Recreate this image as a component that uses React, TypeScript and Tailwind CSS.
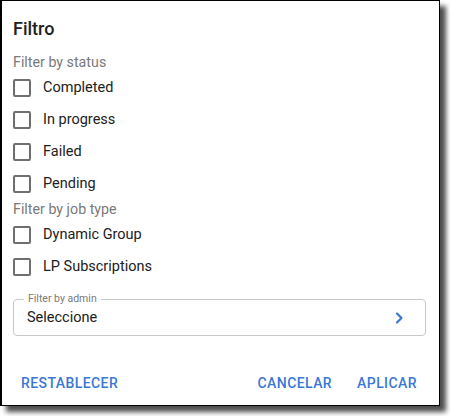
import { useState } from 'react';

const statusOptions = ['Completed', 'In progress', 'Failed', 'Pending'];
const jobTypeOptions = ['Dynamic Group', 'LP Subscriptions'];

const CheckRow = ({ label, checked, onToggle }: { label: string; checked: boolean; onToggle: () => void }) => (
  <label className="flex items-center h-8 cursor-pointer" onClick={onToggle}>
    <span className="w-[18px] h-[18px] rounded-[2px] border-2 border-[#6f6f6f] flex items-center justify-center">
      {checked && (
        <svg width="14" height="14" viewBox="0 0 24 24" fill="none" stroke="#6f6f6f" strokeWidth="3">
          <path d="M5 12l5 5 9-10" />
        </svg>
      )}
    </span>
    <span className="ml-3 text-[14.5px] text-[#212121] leading-5">{label}</span>
  </label>
);

const FilterDialog = () => {
  const [checked, setChecked] = useState<Record<string, boolean>>({});
  const toggle = (k: string) => setChecked((c) => ({ ...c, [k]: !c[k] }));

  return (
    <div className="w-[440px] h-[406px] bg-white border border-black border-l-2 shadow-[6px_6px_5px_rgba(0,0,0,0.7)] flex flex-col pl-[11px] pr-3">
      <h2 className="mt-4 text-[18px] leading-6 font-medium text-[#212121]">Filtro</h2>

      <div className="mt-[11px] text-[14.25px] leading-5 text-[#7a7a7a]">Filter by status</div>
      {statusOptions.map((o) => (
        <CheckRow key={o} label={o} checked={!!checked[o]} onToggle={() => toggle(o)} />
      ))}

      <div className="mt-[-1px] text-[14.25px] leading-5 text-[#7a7a7a]">Filter by job type</div>
      {jobTypeOptions.map((o) => (
        <CheckRow key={o} label={o} checked={!!checked[o]} onToggle={() => toggle(o)} />
      ))}

      <div className="relative mt-4 h-[37px] mr-[1px] border border-[#c8c8c8] rounded-[4px] flex items-center pl-[13px] pr-5">
        <span className="absolute -top-[8px] left-[10px] bg-white px-[4px] text-[10.5px] leading-[14px] text-[#7a7a7a]">
          Filter by admin
        </span>
        <span className="flex-1 text-[14.5px] text-[#212121]">Seleccione</span>
        <svg width="12" height="14" viewBox="0 0 12 14" fill="none" stroke="#3b78d4" strokeWidth="2.2" strokeLinecap="round" strokeLinejoin="round">
          <path d="M4 2.5l4.5 4.5L4 11.5" />
        </svg>
      </div>

      <div className="mt-auto mb-1 flex items-center">
        <button className="px-2 h-9 text-[14px] font-medium tracking-[0.03em] text-[#3b78d4]">RESTABLECER</button>
        <div className="flex-1" />
        <button className="px-2 h-9 text-[14px] font-medium tracking-[0.03em] text-[#3b78d4]">CANCELAR</button>
        <button className="ml-[9px] mr-[2px] px-2 h-9 text-[14px] font-medium tracking-[0.03em] text-[#3b78d4]">APLICAR</button>
      </div>
    </div>
  );
};

export default function App() {
  return (
    <div className="w-[450px] h-[416px] bg-white" style={{ fontFamily: 'Roboto, "Noto Sans", sans-serif' }}>
      <FilterDialog />
    </div>
  );
}
